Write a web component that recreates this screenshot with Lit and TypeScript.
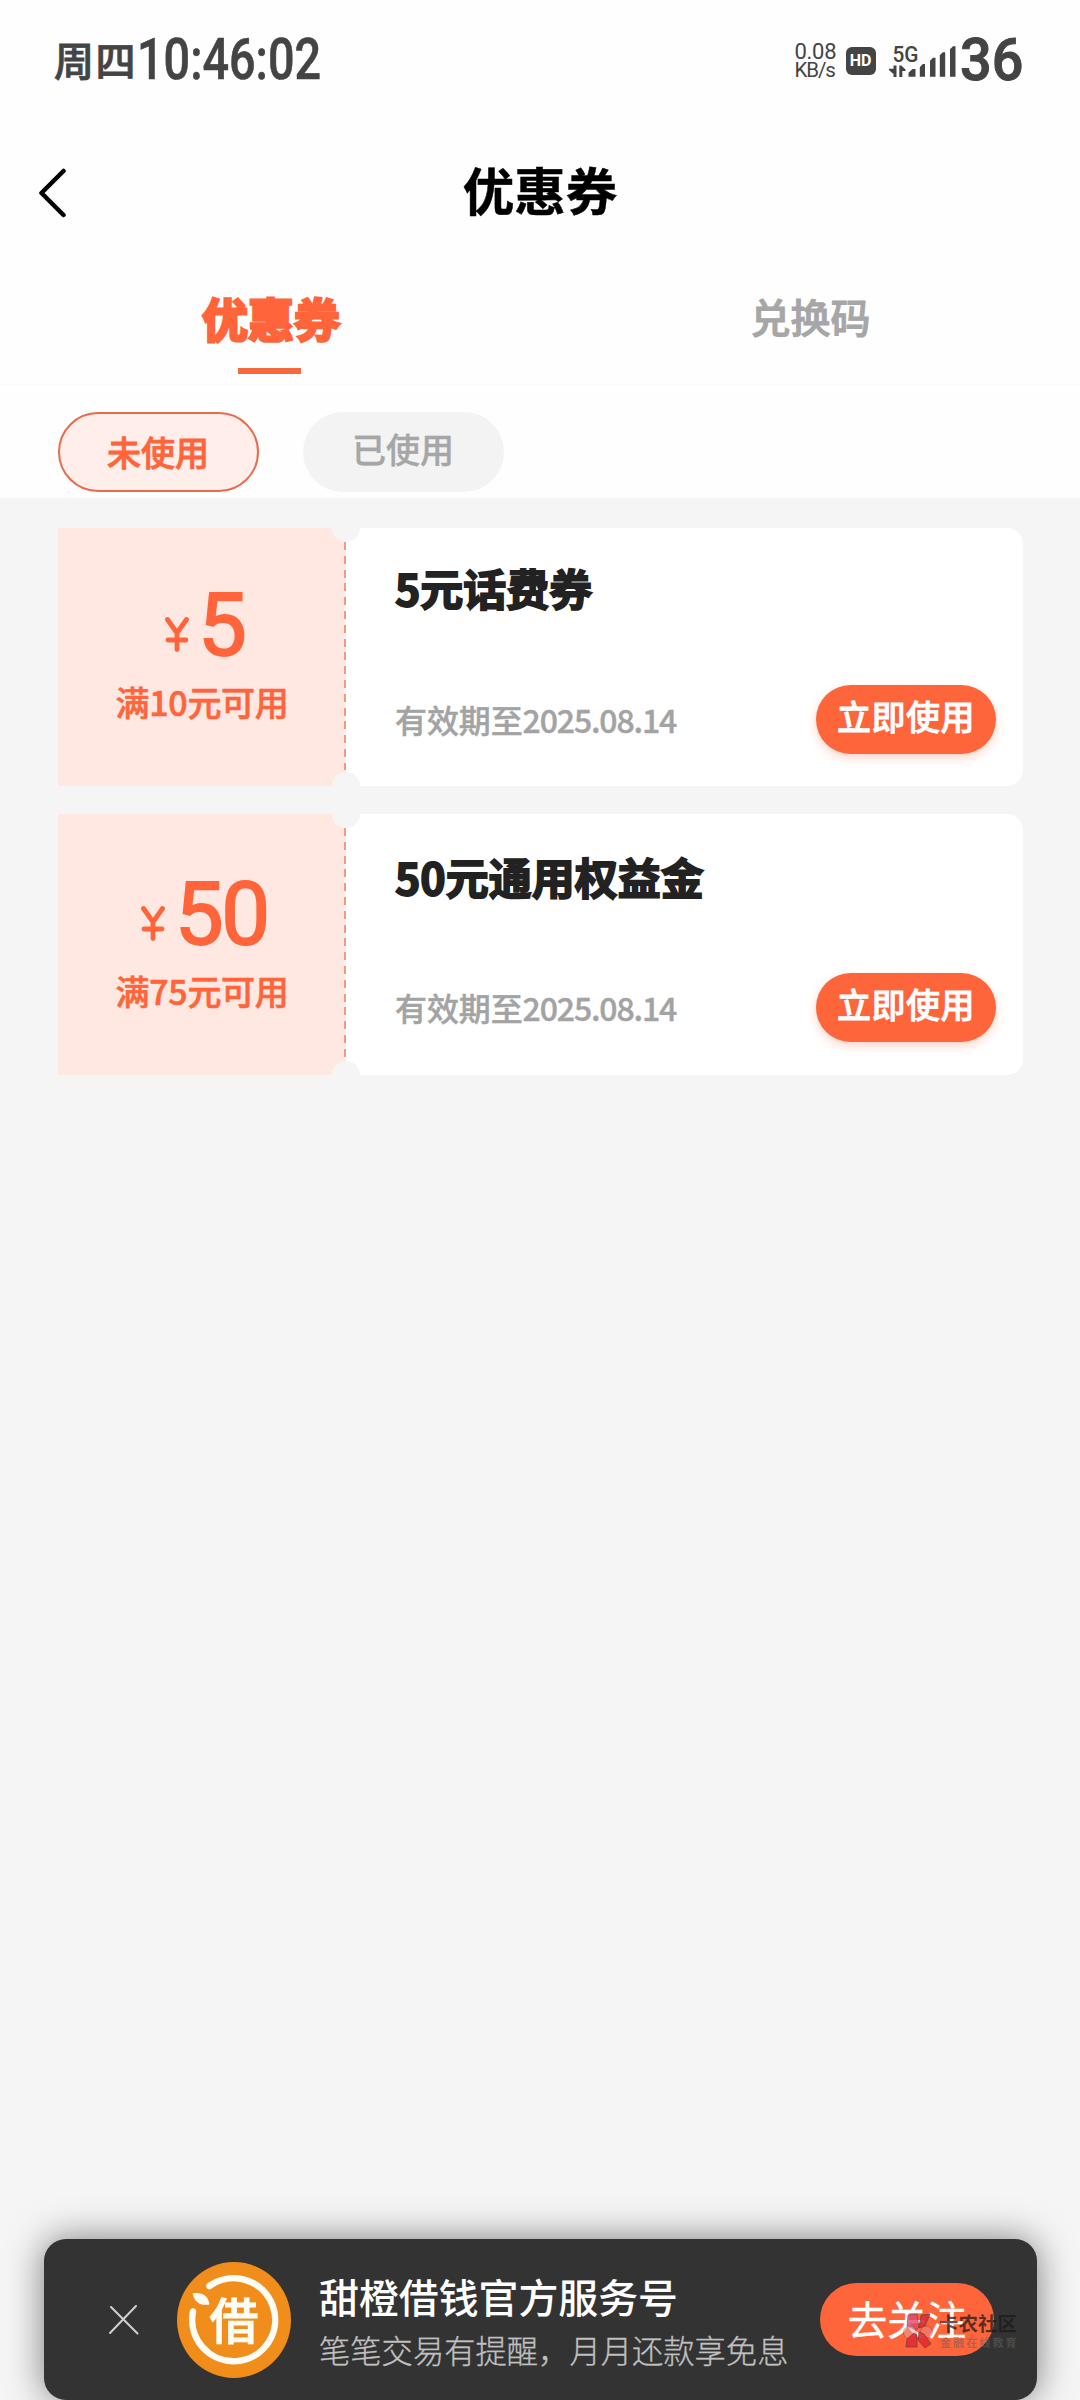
import { LitElement, html, css } from "lit";
import { customElement, property } from "lit/decorators.js";

interface Coupon {
  amount: string;
  condition: string;
  title: string;
  expiry: string;
  tall: boolean;
}

const COUPONS: Coupon[] = [
  { amount: "5", condition: "满10元可用", title: "5元话费券", expiry: "2025.08.14", tall: false },
  { amount: "50", condition: "满75元可用", title: "50元通用权益金", expiry: "2025.08.14", tall: true },
];

@customElement("status-bar")
class StatusBar extends LitElement {
  static styles = css`
    :host { display: flex; justify-content: space-between; height: 120px; padding: 0 58px 0 54px; box-sizing: border-box; color: #444; font-family: "Noto Sans CJK SC", sans-serif; white-space: nowrap; }
    .left, .right { display: flex; align-items: flex-start; }
    .day { font-size: 40px; line-height: 40px; width: 83px; margin-top: 39px; font-weight: 500; letter-spacing: 1.5px; -webkit-text-stroke: 0.8px #444; }
    .clock { font-family: Roboto, sans-serif; font-weight: 500; font-size: 57px; line-height: 57px; margin-top: 31px; width: 190px; transform: scaleX(0.82); transform-origin: left; -webkit-text-stroke: 0.6px #444; }
    .rate { display: flex; flex-direction: column; font-family: Roboto, sans-serif; font-size: 22px; line-height: 19px; margin-top: 42px; width: 51px; letter-spacing: -0.3px; }
    .unit { font-size: 20.500px; letter-spacing: -1.100px; }
    .hd { width: 30px; height: 28px; margin-top: 47px; border-radius: 6px; background: #444; color: #fff; font: 700 16px/28px Roboto, sans-serif; text-align: center; }
    .signal { width: 68px; height: 34px; margin: 44px 0 0 12px; }
    .g { font: 500 22px Roboto, sans-serif; fill: #444; }
    .battery { font-family: Roboto, sans-serif; font-weight: 500; font-size: 60px; line-height: 60px; margin: 29.500px 0 0 4.500px; width: 62px; transform: scaleX(0.93); transform-origin: left; -webkit-text-stroke: 1px #444; }
  `;
  render() {
    return html`
      <div class="left"><span class="day">周四</span><span class="clock">10:46:02</span></div>
      <div class="right">
        <div class="rate"><span>0.08</span><span class="unit">KB/s</span></div>
        <div class="hd">HD</div>
        <svg class="signal" viewBox="886 44 68 34" fill="#444">
          <text class="g" x="890.500" y="61.500" textLength="26" lengthAdjust="spacingAndGlyphs">5G</text>
          <path d="M891.500 65.500h3v11.500h-3v-3.500h-0.800l-3.700-3.500v-1.200h4.500zM897.300 77v-11.500h2l4.200 4v1.500h-3.200v6z" />
          <path d="M906.500 76.700v-4l4-3.700h3v7.700zM917.800 76.700v-9.500l3-3.200h2.200v12.700zM928 76.700v-16l3-3h2.500v19zM937.800 76.700v-21.500l3-3h2.400v24.500zM948 76.700v-27.500l3-3h2.500v30.500z" />
        </svg>
        <div class="battery">36</div>
      </div>`;
  }
}

@customElement("coupon-card")
class CouponCard extends LitElement {
  @property({ attribute: false }) coupon!: Coupon;
  static styles = css`
    :host { display: block; font-family: "Noto Sans CJK SC", sans-serif; white-space: nowrap; }
    .card { display: flex; height: 258px; border-radius: 0 16px 16px 0; background: #fff; position: relative; overflow: hidden; }
    .tall { height: 261px; }
    .tall .value, .tall .info { padding-top: 2.500px; }
    .value { width: 288px; box-sizing: border-box; background: #ffe8e2; color: #ff643a; display: flex; flex-direction: column; align-items: center; }
    .sum { display: flex; align-items: flex-start; height: 86px; margin: 54px 0 0 5px; }
    .yen { margin: 35px 9.500px 0 0; height: 35px; }
    .yen svg { display: block; width: 24px; height: 35px; }
    .amount { font-family: Roboto, sans-serif; font-weight: 400; font-size: 87px; line-height: 86px; letter-spacing: -2.500px; -webkit-text-stroke: 1.800px #ff643a; }
    .cond { font-size: 34px; line-height: 34px; font-weight: 500; margin: 17px 0 0 0; letter-spacing: -0.300px; -webkit-text-stroke: 0.600px #ff643a; }
    .info { flex: 1; box-sizing: border-box; padding-left: 49px; }
    .title { font-size: 43px; line-height: 43px; font-weight: 700; color: #222; margin-top: 38px; -webkit-text-stroke: 1.800px #222; }
    .row { display: flex; justify-content: space-between; align-items: flex-start; margin-top: 75.500px; padding-right: 27px; }
    .date { display: flex; font-size: 32px; line-height: 32px; color: #a3a3a3; margin-top: 18px; font-weight: 500; -webkit-text-stroke: 0.400px #a3a3a3; }
    .cjk { letter-spacing: -0.1px; }
    .num { letter-spacing: -1.150px; }
    .use { width: 180px; height: 69px; border-radius: 35px; background: #ff653b; color: #fff; font-size: 34px; line-height: 62px; font-weight: 500; letter-spacing: 0.5px; text-align: center; box-shadow: 0 4px 10px rgba(255, 101, 59, 0.28); -webkit-text-stroke: 0.8px #fff; }
    .notch { position: absolute; left: 274px; width: 28px; height: 28px; border-radius: 50%; background: #f5f5f5; }
    .up { top: -14px; }
    .down { bottom: -14px; }
    .perforation { position: absolute; left: 285.500px; top: 14px; bottom: 16px; width: 2.500px; background: repeating-linear-gradient(#f09a84 0 8px, #fff3ef 8px 13.800px); }
  `;
  render() {
    const c = this.coupon;
    return html`
      <div class="card ${c.tall ? "tall" : ""}">
        <div class="value">
          <div class="sum">
            <span class="yen" role="img" aria-label="人民币"><svg viewBox="0 0 24 35" fill="none" stroke="#ff643a" stroke-width="4.800" stroke-linecap="round"><path d="M2.500 2.500L12 16L21.500 2.500M12 16V32.500M3 23H21" /></svg></span>
            <span class="amount">${c.amount}</span>
          </div>
          <div class="cond">${c.condition}</div>
        </div>
        <div class="info">
          <div class="title">${c.title}</div>
          <div class="row">
            <div class="date"><span class="cjk">有效期至</span><span class="num">${c.expiry}</span></div>
            <div class="use">立即使用</div>
          </div>
        </div>
        <i class="perforation"></i><i class="notch up"></i><i class="notch down"></i>
      </div>`;
  }
}

@customElement("follow-banner")
class FollowBanner extends LitElement {
  static styles = css`
    :host { display: flex; align-items: flex-start; height: 161.500px; box-sizing: border-box; border-radius: 22px; background: #333; box-shadow: 0 0 36px rgba(0, 0, 0, 0.5); font-family: "Noto Sans CJK SC", sans-serif; white-space: nowrap; position: relative; }
    .close { width: 30px; height: 30px; margin: 66.500px 0 0 65px; }
    .logo { width: 114px; height: 116px; margin: 23.500px 0 0 38px; }
    .mark { font-size: 49px; font-weight: 500; fill: #fffdf6; stroke: #fffdf6; stroke-width: 1px; }
    .copy { margin: 37.500px 0 0 28px; width: 501px; }
    .name { font-size: 39.900px; line-height: 40px; font-weight: 500; color: #fff; }
    .desc { font-size: 31.300px; line-height: 32px; font-weight: 300; color: #c0c0c0; margin-top: 18px; -webkit-text-stroke: 0.300px #c0c0c0; }
    .follow { width: 174px; height: 73px; margin-top: 44.500px; border-radius: 37px; background: #ff653b; color: #fff; font-size: 39.500px; line-height: 70px; text-align: center; -webkit-text-stroke: 0.400px #fff; }
    .stamp { position: absolute; left: 858px; top: 74px; display: flex; gap: 3px; }
    .flower { width: 34px; height: 36px; }
    .words { display: flex; flex-direction: column; }
    .w1 { font-size: 19.500px; line-height: 20px; font-weight: 700; color: rgba(28, 24, 24, 0.72); }
    .w2 { font-size: 11px; line-height: 12px; letter-spacing: 2.100px; font-weight: 700; color: rgba(100, 96, 96, 0.55); margin: 3px 0 0 1px; }
  `;
  render() {
    return html`
      <svg class="close" viewBox="0 0 30 30" stroke="#d0d0d0" stroke-width="2" stroke-linecap="round"><path d="M2 2L28.500 28.500M27 1L1 28" /></svg>
      <svg class="logo" viewBox="177 2262 114 116">
        <ellipse cx="234" cy="2320" rx="57" ry="58" fill="#f08d1b" />
        <path d="M209.500 2286A41.500 41.500 0 1 1 193 2311.500" fill="none" stroke="#fffdf6" stroke-width="6.500" stroke-linecap="round" />
        <path d="M192.500 2293.500C202 2291.500 208.500 2296 209.500 2304.500C200 2306 195 2302.500 192.500 2293.500Z" fill="#fffdf6" />
        <text class="mark" x="234" y="2338.500" text-anchor="middle">借</text>
      </svg>
      <div class="copy">
        <div class="name">甜橙借钱官方服务号</div>
        <div class="desc">笔笔交易有提醒，月月还款享免息</div>
      </div>
      <div class="follow">去关注</div>
      <div class="stamp">
        <svg class="flower" viewBox="0 0 34 36" stroke="#6a3a3c" stroke-width="0.700">
          <path d="M6 2L15 1L17 14L14 17L5 13Z" fill="#e0486a" opacity="0.8" />
          <path d="M19 2L28 1L23 13L17 15Z" fill="#dc3038" opacity="0.92" />
          <circle cx="8" cy="19.500" r="6.500" fill="#e8a0a4" opacity="0.5" />
          <circle cx="24.500" cy="19" r="6" fill="#e8888c" opacity="0.5" />
          <path d="M12 20L15 22V34H4L5 26Z" fill="#e62c30" opacity="0.92" />
          <path d="M17 19L22 21L29 31L23 35L16 27Z" fill="#e62c30" opacity="0.92" />
        </svg>
        <div class="words"><span class="w1">卡农社区</span><span class="w2">金融在线教育</span></div>
      </div>`;
  }
}

@customElement("app-root")
class AppRoot extends LitElement {
  static styles = css`
    :host { display: flex; flex-direction: column; width: 1080px; height: 2400px; overflow: hidden; background: #f5f5f5; font-family: "Noto Sans CJK SC", sans-serif; white-space: nowrap; }
    .top { background: #fefefe; height: 498px; }
    .nav { display: grid; grid-template-columns: 120px 1fr 120px; height: 145px; align-items: start; }
    .back { width: 30px; height: 50px; margin: 48px 0 0 38px; }
    .heading { text-align: center; font-size: 51.500px; line-height: 52px; font-weight: 700; color: #000; margin-top: 43px; -webkit-text-stroke: 0.500px #000; }
    .tabs { display: grid; grid-template-columns: 1fr 1fr; height: 120px; border-bottom: 1px solid #fbfbfb; box-sizing: border-box; }
    .tab { display: flex; flex-direction: column; align-items: center; font-size: 40px; line-height: 46px; font-weight: 500; color: #a6a6a6; padding: 27.500px 0 0 1px; -webkit-text-stroke: 1px #a6a6a6; }
    .on { font-size: 46px; font-weight: 700; color: #ff643a; padding: 28.500px 0 0 2px; -webkit-text-stroke: 2.800px #ff643a; }
    .on::after { content: ""; width: 63px; height: 6px; margin: 28.500px 3px 0 0; background: #f8683f; }
    .filters { display: flex; gap: 44px; padding: 27px 0 0 57.500px; }
    .pill { width: 201px; height: 80px; box-sizing: border-box; border-radius: 40px; background: #f3f3f3; color: #a6a6a6; font-size: 34px; line-height: 73px; font-weight: 500; text-align: center; -webkit-text-stroke: 0.400px #a6a6a6; }
    .picked { background: #ffeeea; border: 2.500px solid #e96b4c; color: #ff643a; line-height: 75px; -webkit-text-stroke: 0.8px #ff643a; }
    .list { display: flex; flex-direction: column; gap: 28px; padding: 30px 57px 0 58px; }
    .fill { flex: 1; }
    .banner { margin: 0 43px 0 44px; }
  `;
  render() {
    return html`
      <div class="top">
        <status-bar></status-bar>
        <div class="nav">
          <svg class="back" viewBox="38 168 30 50" fill="none" stroke="#000" stroke-width="4.500" stroke-linecap="round" stroke-linejoin="round"><path d="M63.500 171L41.500 193L63.500 215" /></svg>
          <div class="heading">优惠券</div>
        </div>
        <div class="tabs"><div class="tab on">优惠券</div><div class="tab">兑换码</div></div>
        <div class="filters"><div class="pill picked">未使用</div><div class="pill">已使用</div></div>
      </div>
      <div class="list">${COUPONS.map((c) => html`<coupon-card .coupon=${c}></coupon-card>`)}</div>
      <div class="fill"></div>
      <follow-banner class="banner"></follow-banner>`;
  }
}
